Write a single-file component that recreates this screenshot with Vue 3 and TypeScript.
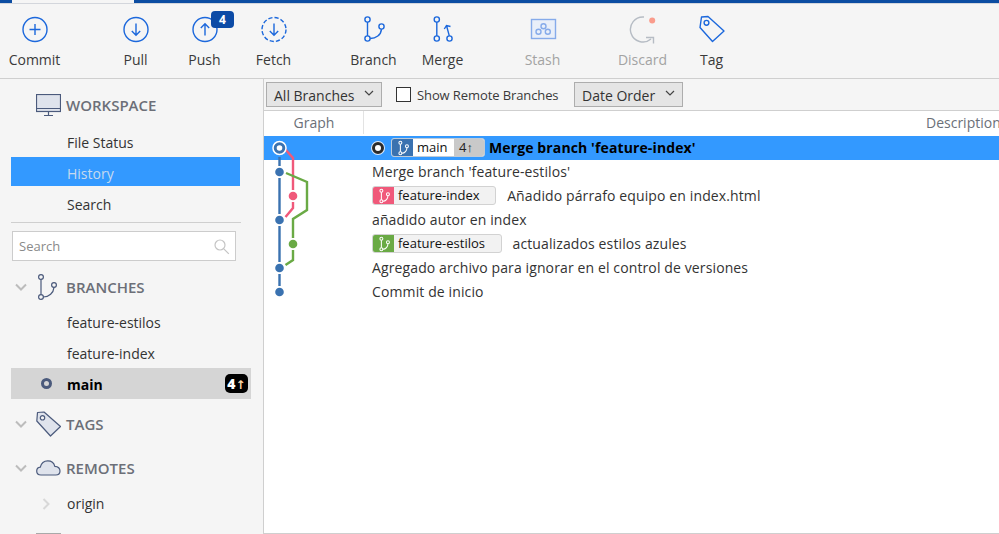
<script setup lang="ts">
interface Commit {
  msg: string
  tag?: string
  tagKind?: string
}

const commits: Commit[] = [
  { msg: "Merge branch 'feature-index'" },
  { msg: "Merge branch 'feature-estilos'" },
  { msg: 'Añadido párrafo equipo en index.html', tag: 'feature-index', tagKind: 'pink' },
  { msg: 'añadido autor en index' },
  { msg: 'actualizados estilos azules', tag: 'feature-estilos', tagKind: 'green' },
  { msg: 'Agregado archivo para ignorar en el control de versiones' },
  { msg: 'Commit de inicio' },
]

const dots = [
  { x: 15.5, y: 36, c: '#3a72b0' },
  { x: 15.5, y: 84, c: '#3a72b0' },
  { x: 29, y: 60, c: '#f0597a' },
  { x: 29, y: 108, c: '#6aaa45' },
  { x: 15.5, y: 132, c: '#3a72b0' },
  { x: 15.5, y: 156, c: '#3a72b0' },
]
</script>

<template>
  <div class="app">
    <svg width="0" height="0" class="defs">
      <symbol id="branch-glyph" viewBox="0 0 16 18">
        <circle cx="5" cy="3" r="1.7" />
        <circle cx="5" cy="15" r="1.7" />
        <circle cx="12.5" cy="7" r="1.7" />
        <path d="M5 4.7V13.3M6.7 15C10 15 12.5 12 12.5 8.7" />
      </symbol>
    </svg>

    <div class="strip"><div class="strip-tab"></div></div>

    <header class="toolbar">
      <div class="group first">
        <button class="tool">
          <svg class="ico" viewBox="0 -0.5 30 30"><circle cx="15" cy="15" r="12" /><path d="M15 9.5v11M9.5 15h11" /></svg>
          <span>Commit</span>
        </button>
      </div>
      <div class="group">
        <button class="tool">
          <svg class="ico" viewBox="0 -0.5 30 30"><circle cx="15" cy="15" r="12" /><path d="M15 9v11.5M10.8 16.5l4.2 4.2 4.2-4.2" /></svg>
          <span>Pull</span>
        </button>
        <button class="tool">
          <svg class="ico" viewBox="0 -0.5 30 30"><circle cx="15" cy="15" r="12" /><path d="M15 21V9.5M10.8 13.5L15 9.3l4.2 4.2" /></svg>
          <span>Push</span>
          <b class="push-badge">4</b>
        </button>
        <button class="tool">
          <svg class="ico" viewBox="0 -0.5 30 30"><circle cx="15" cy="15" r="12" stroke-dasharray="4.2 2.1" /><path d="M15 9v11.5M10.8 16.5l4.2 4.2 4.2-4.2" /></svg>
          <span>Fetch</span>
        </button>
      </div>
      <div class="group">
        <button class="tool">
          <svg class="ico" viewBox="0 0 30 30">
            <circle cx="8.5" cy="5.5" r="2.6" /><circle cx="8.5" cy="24.5" r="2.6" /><circle cx="22.5" cy="12.5" r="2.6" />
            <path d="M8.5 8.1v13.8M11.1 24.5C17 24.5 22 21 22.5 15.1" />
          </svg>
          <span>Branch</span>
        </button>
        <button class="tool">
          <svg class="ico" viewBox="0 0 30 30">
            <circle cx="8.8" cy="5.5" r="2.6" /><circle cx="8.8" cy="24.5" r="2.6" /><circle cx="21.5" cy="24.5" r="2.6" />
            <path d="M8.8 8.1v13.8M21.3 21.9L18.5 11.5M16.3 15L18.5 11.5L22.5 12.5" />
          </svg>
          <span>Merge</span>
        </button>
      </div>
      <div class="group">
        <button class="tool off">
          <svg class="ico stash" viewBox="0 0 30 30">
            <rect x="3.5" y="5.5" width="24" height="19" />
            <circle cx="15.5" cy="12.2" r="2.5" /><circle cx="10.5" cy="17.8" r="2.5" /><circle cx="19.8" cy="17.8" r="2.5" />
          </svg>
          <span>Stash</span>
        </button>
      </div>
      <div class="group">
        <button class="tool off">
          <svg class="ico discard" viewBox="0 0 30 30">
            <path d="M16 3A12.5 12.5 0 1 0 23 25M18 23.5h7.5v6" />
            <circle class="discard-dot" cx="24.2" cy="6.5" r="3" />
          </svg>
          <span>Discard</span>
        </button>
        <button class="tool">
          <svg class="ico" viewBox="0 0 30 30">
            <path d="M4.5 3L11 2.5L27 17L15.5 27.5L3 13.5Z" stroke-linejoin="round" />
            <circle cx="9.5" cy="8.8" r="2.4" />
          </svg>
          <span>Tag</span>
        </button>
      </div>
    </header>

    <div class="body">
      <aside class="sidebar">
        <div class="head head-workspace">
          <svg class="side-ico" viewBox="0 0 25 22">
            <rect x="0.5" y="0.5" width="24" height="17" class="fill" />
            <path d="M0.5 14.5h24M12.5 18v3M8 21.5h9" />
          </svg>
          <span>WORKSPACE</span>
        </div>
        <nav class="nav">
          <a class="nav-item">File Status</a>
          <a class="nav-item active">History</a>
          <a class="nav-item">Search</a>
        </nav>
        <div class="divider"></div>
        <label class="search">
          <input placeholder="Search" />
          <svg width="17" height="17" viewBox="0 0 17 17"><circle cx="7" cy="7" r="5" /><path d="M10.8 10.8l5 5" /></svg>
        </label>

        <div class="head head-branches">
          <svg class="chev" viewBox="0 0 12 8"><path d="M1 1.5l5 5 5-5" /></svg>
          <svg class="side-ico branch-ico" viewBox="0 0 25 26">
            <circle cx="5" cy="3" r="2.4" /><circle cx="5" cy="23" r="2.4" /><circle cx="18" cy="11" r="2.4" />
            <path d="M5 5.4v15.2M7.4 23C13 23 17.500 19 18 13.400" />
          </svg>
          <span>BRANCHES</span>
        </div>
        <div class="branch-list">
          <div class="branch">feature-estilos</div>
          <div class="branch">feature-index</div>
          <div class="branch current">
            <i class="cur-ring"></i>
            <span>main</span>
            <b class="ahead">4<em>↑</em></b>
          </div>
        </div>

        <div class="head head-tags">
          <svg class="chev" viewBox="0 0 12 8"><path d="M1 1.5l5 5 5-5" /></svg>
          <svg class="side-ico" viewBox="0 0 25 26">
            <path class="fill" d="M1.5 1.5L8 1L24.5 15.5L14.5 25L0.8 10Z" stroke-linejoin="round" />
            <circle cx="6.5" cy="6.8" r="2.2" fill="#f5f5f5" />
          </svg>
          <span>TAGS</span>
        </div>

        <div class="head head-remotes">
          <svg class="chev" viewBox="0 0 12 8"><path d="M1 1.5l5 5 5-5" /></svg>
          <svg class="side-ico" viewBox="0 0 25 16">
            <path class="fill" d="M5 15C2.500 15 0.700 13.300 0.700 11C0.700 8.800 2.300 7.400 4.300 7.200C5.200 3.300 8.100 0.800 11.800 0.800C15.300 0.800 18 3 18.800 6.300C21.800 6.500 24 8.300 24 11C24 13.300 22.200 15 19.800 15Z" />
          </svg>
          <span>REMOTES</span>
        </div>
        <div class="remote">
          <svg class="chev-right" viewBox="0 0 8 12"><path d="M1.500 1l5 5-5 5" /></svg>
          <span>origin</span>
        </div>

        <div class="head head-stashes">
          <svg class="side-ico" viewBox="0 0 25 22"><rect x="0.500" y="0.500" width="24" height="21" class="stash-fill" /></svg>
        </div>
      </aside>

      <main class="main">
        <div class="filters">
          <button class="select all"><span>All Branches</span>
            <svg viewBox="0 0 10 6"><path d="M1 1l4 4 4-4" /></svg>
          </button>
          <label class="remote-check"><i class="box"></i><span>Show Remote Branches</span></label>
          <button class="select order"><span>Date Order</span>
            <svg viewBox="0 0 10 6"><path d="M1 1l4 4 4-4" /></svg>
          </button>
        </div>

        <div class="cols">
          <div class="col-graph">Graph</div>
          <div class="col-desc">Description</div>
        </div>

        <div class="list">
          <div
            v-for="(c, i) in commits"
            :key="c.msg"
            class="row"
            :class="{ selected: i === 0 }"
          >
            <template v-if="i === 0">
              <i class="head-ring"></i>
              <span class="ref head-ref">
                <span class="ref-ico blue"><svg><use href="#branch-glyph" /></svg></span>
                <span class="ref-name">main</span>
                <span class="ref-count">4↑</span>
              </span>
              <strong>{{ c.msg }}</strong>
            </template>
            <template v-else>
              <span v-if="c.tag" class="ref">
                <span class="ref-ico" :class="c.tagKind"><svg><use href="#branch-glyph" /></svg></span>
                <span class="ref-name">{{ c.tag }}</span>
              </span>
              <span>{{ c.msg }}</span>
            </template>
          </div>

          <svg class="graph" width="60" height="168" viewBox="0 0 60 168">
            <path class="edge" stroke="#3a72b0" d="M15.500 21V30M15.500 42V78M15.500 90V126M15.500 138V150" />
            <path class="edge" stroke="#f0597a" d="M21 13L29 22V54M29 66V72L21.500 81" />
            <path class="edge" stroke="#6aaa45" d="M22 37L43 46V74L29 83V102M29 114V124L21.500 129" />
            <circle
              v-for="d in dots"
              :key="d.x + '-' + d.y"
              :cx="d.x"
              :cy="d.y"
              r="4.300"
              :fill="d.c"
            />
            <circle cx="15.500" cy="12" r="6.500" fill="#3a72b0" stroke="#fff" stroke-width="1.500" />
            <circle cx="15.500" cy="12" r="2.800" fill="#fff" />
          </svg>
        </div>
      </main>
    </div>
  </div>
</template>

<style>
html, body {
  margin: 0;
  background: #f5f5f5;
}
</style>

<style scoped>
.app {
  height: 534px;
  width: 999px;
  overflow: hidden;
  display: flex;
  flex-direction: column;
  font-family: "Open Sans", "Noto Sans", sans-serif;
  font-size: 14px;
  color: #333;
  background: #f5f5f5;
}

.defs {
  position: absolute;
}

.strip {
  height: 3px;
  flex: none;
  background: #0c4da2;
  border-bottom: 1px solid #d3d6dc;
}

.strip-tab {
  width: 122px;
  height: 4px;
  margin-left: 12px;
  background: #f5f5f5;
  border-bottom: 1px solid #d3d6dc;
  box-sizing: border-box;
}

.toolbar {
  height: 74px;
  flex: none;
  display: flex;
  padding-left: 1px;
  border-bottom: 1px solid #cfcfcf;
}

.group {
  display: flex;
}

.group + .group {
  margin-left: 31px;
}

.group.first {
  margin: 0 1px 0 -1px;
}

.tool {
  position: relative;
  width: 69px;
  padding: 10px 0 0;
  border: none;
  background: none;
  font: inherit;
  color: #3a3a3a;
  display: flex;
  flex-direction: column;
  align-items: center;
}

.tool span {
  margin-top: 6px;
  line-height: 20px;
}

.tool.off span {
  color: #a3a3a3;
}

.ico {
  width: 30px;
  height: 30px;
  fill: none;
  stroke: #1c68dc;
  stroke-width: 1.400;
}

.ico.stash {
  stroke: #86abea;
  fill: #e9eff9;
}

.ico.discard {
  stroke: #b6bcc4;
}

.discard-dot {
  fill: #fa9c8c;
  stroke: none;
}

.push-badge {
  position: absolute;
  left: 41px;
  top: 7px;
  width: 23px;
  height: 17px;
  line-height: 17px;
  border-radius: 4px;
  background: #0c4ba6;
  color: #fff;
  font-size: 12px;
  text-align: center;
}

.body {
  flex: 1;
  min-height: 0;
  display: flex;
}

.sidebar {
  width: 264px;
  flex: none;
  overflow: hidden;
  padding-left: 11px;
  box-sizing: border-box;
  border-right: 1px solid #cfcfcf;
}

.head {
  height: 30px;
  display: flex;
  align-items: center;
  font-weight: 600;
  font-size: 15px;
  color: #6c6f78;
}

.head-workspace {
  margin-top: 11px;
  padding-left: 25px;
}

.side-ico {
  width: 25px;
  flex: none;
  margin-right: 5px;
  fill: none;
  stroke: #4b5a7c;
  stroke-width: 1.200;
}

.side-ico .fill {
  fill: #dfe3ec;
}

.stash-fill {
  fill: #dfe3ec;
  stroke: #a9a9a9;
}

.head-workspace .side-ico {
  height: 22px;
}

.branch-ico {
  height: 26px;
}

.nav {
  margin-top: 7px;
  width: 229px;
  display: flex;
  flex-direction: column;
}

.nav-item {
  height: 30px;
  line-height: 31px;
  padding-left: 56px;
}

.nav-item.active {
  height: 29px;
  line-height: 33px;
  background: #3399ff;
  color: #c6d9ee;
}

.nav-item:last-child {
  height: 36px;
  line-height: 37px;
}

.divider {
  width: 230px;
  height: 1px;
  background: #cfcfcf;
}

.search {
  width: 224px;
  height: 30px;
  margin: 8px 0 0 1px;
  padding: 0 5px 0 6px;
  box-sizing: border-box;
  display: flex;
  align-items: center;
  background: #fff;
  border: 1px solid #ccc;
}

.search input {
  flex: 1;
  min-width: 0;
  border: none;
  outline: none;
  padding: 0;
  font: inherit;
  font-size: 13px;
}

.search input::placeholder {
  color: #8a8a8a;
}

.search svg {
  fill: none;
  stroke: #c4c4c4;
  stroke-width: 1.200;
}

.head-branches {
  margin-top: 11px;
}

.chev {
  width: 12px;
  height: 8px;
  margin: 0 9px 0 4px;
  fill: none;
  stroke: #bcbcbc;
  stroke-width: 2;
}

.branch-list {
  margin-top: 4px;
}

.branch {
  height: 31px;
  line-height: 33px;
  padding-left: 56px;
  position: relative;
}

.branch.current {
  width: 240px;
  padding: 2px 0 0;
  display: flex;
  align-items: center;
  box-sizing: border-box;
  background: #d5d5d5;
  color: #000;
  font-weight: 700;
}

.cur-ring {
  width: 11px;
  height: 11px;
  margin: -2px 15px 0 30px;
  box-sizing: border-box;
  border: 3px solid #4b5a7c;
  border-radius: 50%;
}

.ahead {
  position: absolute;
  left: 214px;
  top: 6px;
  width: 23px;
  height: 19px;
  line-height: 19px;
  border-radius: 5px;
  background: #000;
  color: #fff;
  font-size: 14px;
  text-align: center;
}

.ahead em {
  font-style: normal;
  color: #ffd9a8;
  font-size: 12px;
  font-family: "DejaVu Sans", sans-serif;
}

.head-tags {
  margin-top: 10px;
}

.head-tags .side-ico {
  height: 26px;
}

.head-remotes {
  margin-top: 14px;
}

.head-remotes .side-ico {
  height: 16px;
}

.remote {
  height: 31px;
  margin-top: 5px;
  display: flex;
  align-items: center;
  padding-left: 31px;
}

.chev-right {
  width: 8px;
  height: 12px;
  margin-right: 17px;
  fill: none;
  stroke: #d8d8d8;
  stroke-width: 2;
}

.head-stashes {
  margin-top: 10px;
  padding-left: 25px;
}

.head-stashes .side-ico {
  height: 22px;
}

.main {
  flex: 1;
  min-width: 0;
  display: flex;
  flex-direction: column;
  background: #fff;
  border-bottom: 1px solid #cfcfcf;
}

.filters {
  height: 31px;
  flex: none;
  display: flex;
  align-items: center;
  padding-left: 2px;
  background: #f5f5f5;
  border-bottom: 1px solid #cfcfcf;
}

.select {
  height: 25px;
  padding: 0 0 0 7px;
  display: flex;
  align-items: center;
  justify-content: space-between;
  background: #e5e5e5;
  border: 1px solid #adadad;
  font: inherit;
  color: #333;
  box-sizing: border-box;
}

.select span {
  padding-top: 2px;
}

.select svg {
  width: 10px;
  height: 6px;
  margin-right: 7px;
  margin-top: -3px;
  fill: none;
  stroke: #444;
  stroke-width: 1.200;
}

.select.all {
  width: 116px;
}

.select.order {
  width: 109px;
}

.remote-check {
  width: 178px;
  margin-left: 14px;
  display: flex;
  align-items: center;
  font-size: 13px;
  letter-spacing: -0.1px;
  color: #3a3a3a;
}

.box {
  width: 15px;
  height: 15px;
  margin-right: 6px;
  box-sizing: border-box;
  background: #fff;
  border: 1px solid #333;
}

.cols {
  height: 25px;
  flex: none;
  display: flex;
  line-height: 23px;
  color: #6b7078;
  white-space: nowrap;
  overflow: hidden;
}

.col-graph {
  width: 100px;
  height: 23px;
  flex: none;
  padding-left: 1px;
  box-sizing: border-box;
  text-align: center;
  border-right: 1px solid #e3e3e3;
}

.col-desc {
  padding-left: 562px;
}

.list {
  position: relative;
  flex: 1;
}

.row {
  height: 24px;
  padding: 0 0 1px 108px;
  box-sizing: border-box;
  display: flex;
  align-items: center;
  white-space: nowrap;
  letter-spacing: 0.12px;
}

.row.selected {
  background: #3399ff;
  color: #000;
}

.row.selected strong {
  margin-left: 4px;
  font-weight: 700;
}

.head-ring {
  width: 12px;
  height: 12px;
  margin-right: 7px;
  box-sizing: border-box;
  border: 3px solid #2b2b2b;
  border-radius: 50%;
  background: #fff;
  box-shadow: 0 0 0 1px #dde9f7;
}

.ref {
  height: 19px;
  min-width: 124px;
  margin-right: 11px;
  display: flex;
  align-items: stretch;
  box-sizing: border-box;
  background: #f2f2f2;
  border: 1px solid #d2d2d2;
  border-radius: 3px;
  overflow: hidden;
  color: #111;
  font-size: 13px;
  line-height: 17px;
  letter-spacing: 0;
}

.head-ref {
  min-width: 0;
  margin-right: 0;
  background: #fff;
  border-color: #bfcbd8;
}

.ref-ico {
  width: 21px;
  flex: none;
  display: flex;
  align-items: center;
  justify-content: center;
}

.ref-ico svg {
  width: 14px;
  height: 16px;
  fill: none;
  stroke: #fff;
  stroke-width: 1.200;
}

.ref-ico.blue { background: #3a72b0; }
.ref-ico.pink { background: #f0597a; }
.ref-ico.green { background: #6aaa45; }

.ref-name {
  padding: 0 15.5px 0 4px;
}

.head-ref .ref-name {
  width: 41px;
  padding: 0 0 0 4px;
  box-sizing: border-box;
}

.ref-count {
  width: 30px;
  padding-left: 5px;
  box-sizing: border-box;
  background: #c9c9c9;
  color: #222;
}

.graph {
  position: absolute;
  left: 0;
  top: 0;
  pointer-events: none;
}

.edge {
  fill: none;
  stroke-width: 2.400;
}
</style>
